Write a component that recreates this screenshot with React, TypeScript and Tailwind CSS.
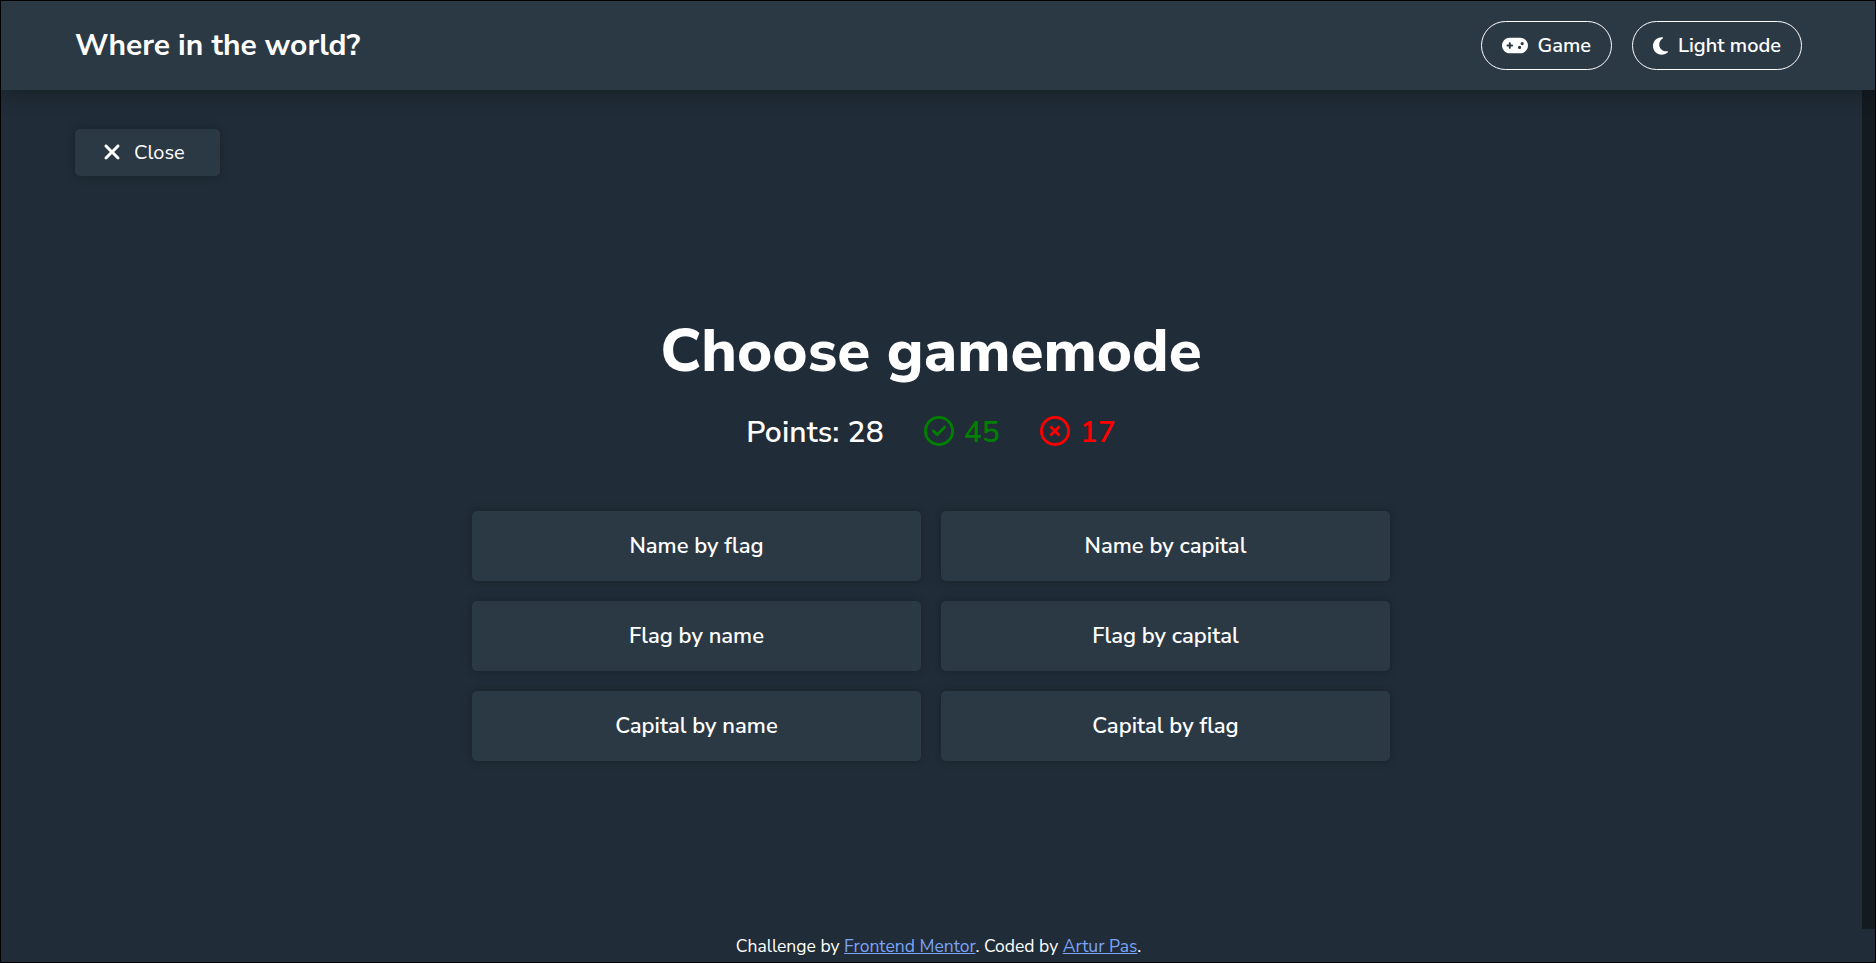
import type { ReactNode } from "react";
import {
  FaGamepad,
  FaMoon,
  FaRegCircleCheck,
  FaRegCircleXmark,
  FaXmark,
} from "react-icons/fa6";

const modes = [
  "Name by flag",
  "Name by capital",
  "Flag by name",
  "Flag by capital",
  "Capital by name",
  "Capital by flag",
];

function PillButton({ icon, label }: { icon: ReactNode; label: string }) {
  return (
    <button className="flex h-[49px] items-center gap-2.5 rounded-full border border-white px-5 text-[20px] leading-none font-semibold">
      {icon}
      {label}
    </button>
  );
}

function Header() {
  return (
    <header className="relative z-10 flex h-[89px] shrink-0 items-center justify-between bg-[#2b3945] pr-[73px] pl-[74px] shadow-[0_5px_20px_rgba(0,0,0,0.25)]">
      <h1 className="text-[30px] leading-none font-bold">Where in the world?</h1>
      <nav className="flex gap-5">
        <PillButton icon={<FaGamepad className="h-[21px] w-[26px]" />} label="Game" />
        <PillButton icon={<FaMoon className="h-5 w-[15px]" />} label="Light mode" />
      </nav>
    </header>
  );
}

function Score() {
  return (
    <div className="mt-5 flex items-center gap-10 text-[30px] leading-[41px] font-semibold">
      <span className="tracking-[0.1px]">Points: 28</span>
      <span className="flex items-center gap-2.5 text-[#008000]">
        <FaRegCircleCheck className="mb-[3px] size-[30px]" />
        45
      </span>
      <span className="flex items-center gap-2.5 text-[#ff0000]">
        <FaRegCircleXmark className="mb-[3px] size-[30px]" />
        17
      </span>
    </div>
  );
}

export default function App() {
  return (
    <div
      className="flex h-[963px] w-full flex-col overflow-hidden border border-black bg-[#202c37] text-white"
      style={{ fontFamily: '"Nunito Sans", Nunito, "Open Sans", sans-serif' }}
    >
      <Header />
      <div className="flex min-h-0 flex-1">
        <main className="flex flex-1 flex-col items-center pt-[39px] pr-px">
          <button className="ml-[74px] flex h-[47px] w-[145px] items-center gap-[13px] self-start rounded-[5px] bg-[#2b3945] pl-[28px] text-[20px] leading-none shadow-[0_0_10px_rgba(0,0,0,0.25)]">
            <FaXmark className="mb-px h-6 w-[18px]" />
            Close
          </button>
          <h2 className="mt-[134px] text-[60px] leading-[82px] font-extrabold">Choose gamemode</h2>
          <Score />
          <div className="mt-[58px] grid w-[918px] grid-cols-2 gap-5">
            {modes.map((mode) => (
              <button
                key={mode}
                className="h-[70px] rounded-[5px] bg-[#2b3945] text-[22px] leading-none font-semibold shadow-[0_0_10px_rgba(0,0,0,0.25)]"
              >
                {mode}
              </button>
            ))}
          </div>
        </main>
        <div className="w-[13px] bg-[#131a20]" />
      </div>
      <footer className="flex h-[33px] shrink-0 items-center justify-center pt-0.5 pl-px text-[17.55px] leading-none">
        <p>
          Challenge by{" "}
          <a href="#" className="text-[#7ba3f7] underline">Frontend Mentor</a>. Coded by{" "}
          <a href="#" className="text-[#7ba3f7] underline">Artur Pas</a>.
        </p>
      </footer>
    </div>
  );
}
